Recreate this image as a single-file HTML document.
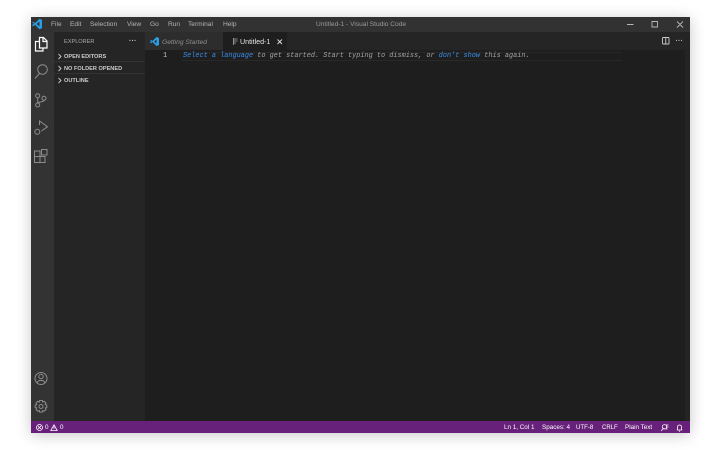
<!DOCTYPE html>
<html><head><meta charset="utf-8"><style>
html,body{margin:0;padding:0;width:720px;height:450px;background:#fff;overflow:hidden}
#w{position:absolute;left:31px;top:17px;width:659px;height:416px;background:#1e1e1e;box-shadow:0 2px 14px rgba(0,0,0,.22);font-family:"Liberation Sans",sans-serif;filter:blur(.25px)}
.a{position:absolute;white-space:nowrap}
#t{left:0;top:0;width:659px;height:15px;background:#323233}
#ab{left:0;top:15px;width:23px;height:389px;background:#333}
#sb{left:23px;top:15px;width:91px;height:389px;background:#252526}
#tb{left:114px;top:15px;width:545px;height:18px;background:#252526}
#tab1{left:114px;top:15px;width:78px;height:18px;background:#2d2d2d}
#tab2{left:192px;top:15px;width:64px;height:18px;background:#1e1e1e}
#st{left:0;top:404px;width:659px;height:12px;background:#68217a}
.m{top:3px;font-size:6.6px;line-height:9px;color:#b4b4b4}
.h{left:33px;font-size:5.6px;line-height:8px;font-weight:bold;color:#ccc}
.s{top:406.5px;font-size:6.3px;line-height:8px;color:#fff}
.c{font-family:"Liberation Mono",monospace;font-style:italic;font-size:6.88px;line-height:10px;color:#a4a4a4;left:152px;top:33.5px}
.c b{font-weight:normal;color:#3a8eee}
svg{position:absolute;overflow:visible}
</style></head><body><div id="w">
<div class="a" id="t"></div><div class="a" id="ab"></div><div class="a" id="sb"></div><div class="a" id="tb"></div><div class="a" id="tab1"></div><div class="a" id="tab2"></div><div class="a" id="st"></div>
<svg style="left:0;top:0" width="14" height="14"><path d="M1 5.500l1-.8 2 1.500 4.500-4.500 2.500 1.200v8.200l-2.500 1.200-4.500-4.500-2 1.500-1-.8 2-2z M8.500 4.500l-3 2.500 3 2.500z" fill="#2ba0e8" fill-rule="evenodd"/></svg>
<div class="a m" style="left:20px">File</div><div class="a m" style="left:39px">Edit</div><div class="a m" style="left:59px">Selection</div><div class="a m" style="left:96px">View</div><div class="a m" style="left:119px">Go</div><div class="a m" style="left:137px">Run</div><div class="a m" style="left:157px">Terminal</div><div class="a m" style="left:192px">Help</div>
<div class="a m" style="left:285px;color:#9a9a9a">Untitled-1 - Visual Studio Code</div>
<svg style="left:596px;top:3px" width="50" height="9" fill="none" stroke="#b8b8b8" stroke-width=".9"><path d="M0 4.500h6.500M25 1.500h5.500v5.500h-5.500zM50 1.500l6 6M56 1.500l-6 6"/></svg>
<svg style="left:0;top:15px" width="23" height="390" fill="none" stroke="#8c8c8c" stroke-width="1">
<path stroke="#fff" stroke-width="1.200" d="M8.500 5.500h4l3.500 3.500v7h-7.500zM8.500 9.500h-4v9.500h7.500v-3M12 5.500v4h4"/>
<path d="M4 46.500l4.500-5"/><circle cx="11.500" cy="37.500" r="4.800"/>
<circle cx="6.700" cy="63.700" r="2"/><circle cx="6.700" cy="73" r="2"/><circle cx="13" cy="66.300" r="2"/><path d="M6.700 65.700v5.300M13 68.300c0 2.200-4.500 1-6.300 2.800"/>
<path d="M8.500 93v-4l8 5.700-6 4.300"/><circle cx="6.300" cy="99.700" r="2.500"/>
<path d="M3.500 124.500h5.500v6h-5.500zM9 124.500h5v6h-5zM3.500 119h5.500v5.500h-5.500zM10.500 117.500h5.500v5.500h-5.500z"/>
<circle cx="10" cy="346.500" r="6"/><circle cx="10" cy="344.500" r="2.200"/><path d="M6 351c1-3.500 7-3.500 8 0"/>
<circle cx="10" cy="374.500" r="2"/><path d="M8.700 368.500h2.600l.4 1.600 1.500-.8 1.800 1.800-.8 1.500 1.600.4v2.600l-1.600.4.800 1.500-1.800 1.800-1.500-.8-.4 1.600h-2.600l-.4-1.600-1.500.8-1.800-1.800.8-1.500-1.600-.4v-2.600l1.600-.4-.8-1.500 1.800-1.800 1.500.8z"/>
</svg>
<div class="a" style="left:33px;top:21px;font-size:5.6px;line-height:8px;color:#aaa">EXPLORER</div>
<div class="a" style="left:98px;top:20px;font-size:7px;line-height:9px;color:#ccc;font-weight:bold;letter-spacing:.2px">···</div>
<svg style="left:27px;top:36px" width="6" height="32" fill="none" stroke="#ccc" stroke-width=".9"><path d="M.5 1l2.500 2.500-2.500 2.500M.5 13l2.500 2.500-2.500 2.500M.5 25l2.500 2.500-2.500 2.500"/></svg>
<div class="a" style="left:23px;top:33px;width:91px;height:12px;border-bottom:1px solid #333;box-sizing:border-box"></div>
<div class="a" style="left:23px;top:45px;width:91px;height:12px;border-bottom:1px solid #333;box-sizing:border-box"></div>
<div class="a h" style="top:35.500px">OPEN EDITORS</div><div class="a h" style="top:47.500px">NO FOLDER OPENED</div><div class="a h" style="top:59.500px">OUTLINE</div>
<svg style="left:119px;top:20px" width="10" height="9"><path d="M0 3.500l1-.7 1.500 1.200 4-4 2.500 1v7l-2.500 1-4-4-1.500 1.200-1-.7 1.500-1.500z M6.500 2.500l-2.300 2 2.300 2z" fill="#2ba0e8" fill-rule="evenodd"/></svg>
<div class="a" style="left:131px;top:20.500px;font-size:6.7px;line-height:9px;font-style:italic;color:#8e8e8e">Getting Started</div>
<svg style="left:202px;top:21px" width="5" height="7" fill="none" stroke="#aaa" stroke-width=".8"><path d="M.5 1h4M.5 3h4M.5 5h2.500M.5 0v7"/></svg>
<div class="a" style="left:209px;top:20.500px;font-size:7.100px;line-height:9px;color:#e4e4e4">Untitled-1</div>
<svg style="left:245.500px;top:21.500px" width="6" height="6" fill="none" stroke="#ddd" stroke-width=".9"><path d="M.5.500l4.500 4.500M5 .5l-4.500 4.500"/></svg>
<svg style="left:630.500px;top:20px" width="8" height="8" fill="none" stroke="#ccc" stroke-width=".9"><rect x=".5" y=".5" width="6.500" height="6.500" rx=".8"/><path d="M3.750 .5v6.500"/></svg>
<div class="a" style="left:644.500px;top:20px;font-size:7px;line-height:9px;color:#bbb;font-weight:bold;letter-spacing:.2px">···</div>
<div class="a" style="left:151px;top:34.500px;width:440px;height:9px;border-top:1px solid #282828;border-bottom:1px solid #282828;box-sizing:border-box"></div>
<div class="a" style="left:654px;top:33px;width:5px;height:371px;background:#242424"></div>
<div class="a" style="left:132px;top:33.500px;font-family:'Liberation Mono',monospace;font-size:6.88px;line-height:10px;color:#c6c6c6">1</div>
<div class="a c"><b>Select a language</b> to get started. Start typing to dismiss, or <b>don't show</b> this again.</div>
<svg style="left:5px;top:406.500px" width="30" height="8" fill="none" stroke="#fff" stroke-width=".8"><circle cx="3.500" cy="3.500" r="3"/><path d="M2 2l3 3M5 2l-3 3M18 .8l3.200 5.700h-6.400zM18 2.500v2.200"/></svg>
<div class="a s" style="left:14px">0</div><div class="a s" style="left:29px">0</div>
<div class="a s" style="left:473px">Ln 1, Col 1</div><div class="a s" style="left:511px">Spaces: 4</div><div class="a s" style="left:545px;font-size:6.100px">UTF-8</div><div class="a s" style="left:571px;font-size:6px">CRLF</div><div class="a s" style="left:594px">Plain Text</div>
<svg style="left:630px;top:406.500px" width="26" height="8" fill="none" stroke="#fff" stroke-width=".8"><circle cx="3.500" cy="2.800" r="2.200"/><path d="M.5 7c.5-2 2-2.500 3-2.500M5 1h2.500M5 3h2.500M5 5h1.500"/><path d="M16.500 6v-3a2 2 0 0 1 4 0v3zM15.800 6h5.400M18 7.200h1"/></svg>
</div></body></html>
